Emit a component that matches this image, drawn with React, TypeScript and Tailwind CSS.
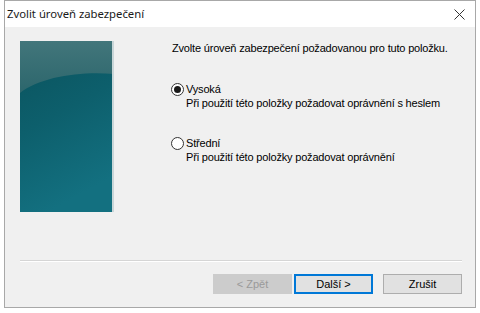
import React from "react";

const sans = { fontFamily: '"Liberation Sans", Arial, sans-serif' };

function SidePicture() {
  return (
    <svg width="94" height="171" viewBox="0 0 94 171" className="block">
      <defs>
        <linearGradient id="main" x1="0" y1="0" x2="0.3" y2="1">
          <stop offset="0" stopColor="#0a525c" />
          <stop offset="0.5" stopColor="#0d5f6c" />
          <stop offset="1" stopColor="#137080" />
        </linearGradient>
        <linearGradient id="gloss" x1="0" y1="0" x2="0" y2="1">
          <stop offset="0" stopColor="#42767b" />
          <stop offset="1" stopColor="#2c666c" />
        </linearGradient>
      </defs>
      <rect x="0" y="0" width="94" height="171" fill="url(#main)" />
      <path d="M0 0 H94 V33 C60 30 20 36 0 52 Z" fill="url(#gloss)" />
      <rect x="92" y="0" width="2" height="171" fill="#c9d6d8" />
    </svg>
  );
}

function Radio({ checked }: { checked?: boolean }) {
  return (
    <span className="flex h-[13px] w-[13px] shrink-0 items-center justify-center rounded-full border border-[#333333] bg-white">
      {checked && <span className="h-[7px] w-[7px] rounded-full bg-[#1a1a1a]" />}
    </span>
  );
}

function Option({ label, desc, checked }: { label: string; desc: string; checked?: boolean }) {
  return (
    <div className="flex flex-col">
      <div className="flex h-[14px] items-center gap-[2px]">
        <Radio checked={checked} />
        <span className="text-[11px] leading-[14px] text-black">{label}</span>
      </div>
      <div className="pl-[15px] text-[11px] leading-[14px] text-black">{desc}</div>
    </div>
  );
}

export default function App() {
  return (
    <div className="h-[313px] w-[480px] bg-white" style={sans}>
      <div className="ml-[4px] flex h-[308px] w-[472px] flex-col border border-[#a8a8a8] bg-[#f0f0f0]">
        {/* title bar */}
        <div className="flex h-[26px] shrink-0 items-center justify-between bg-white pl-[2px] pr-[10px]">
          <span
            className="text-[11.3px] text-[#1a1a1a]"
            style={{ fontFamily: '"Noto Sans", "Open Sans", sans-serif' }}
          >
            Zvolit úroveň zabezpečení
          </span>
          <svg width="11" height="11" viewBox="0 0 11 11">
            <path d="M0.5 0.5 L10.5 10.5 M10.5 0.5 L0.5 10.5" stroke="#333" strokeWidth="1" />
          </svg>
        </div>

        {/* body */}
        <div className="flex h-[185px] shrink-0 pl-[15px] pt-[14px]">
          <SidePicture />
          <div className="ml-[58px] flex flex-col text-[11px] leading-[14px] tracking-[-0.18px] text-black">
            <div>Zvolte úroveň zabezpečení požadovanou pro tuto položku.</div>
            <div className="-ml-[1px] mt-[27px]">
              <Option
                checked
                label="Vysoká"
                desc="Při použití této položky požadovat oprávnění s heslem"
              />
            </div>
            <div className="-ml-[1px] mt-[26px]">
              <Option label="Střední" desc="Při použití této položky požadovat oprávnění" />
            </div>
          </div>
        </div>

        {/* separator */}
        <div className="ml-[15px] mr-[13px] mt-[48px] border-t border-b border-t-[#d5d5d5] border-b-white" />

        {/* buttons */}
        <div className="mt-[12px] flex justify-end pr-[13px] text-[11px]">
          <button className="mr-[2px] h-[20px] w-[79px] border border-[#cccccc] bg-[#cccccc] text-[#9a9a9a]">
            &lt; Zpět
          </button>
          <button className="h-[20px] w-[79px] border-2 border-[#0078d7] bg-[#e1e1e1] text-black">
            Další &gt;
          </button>
          <button className="ml-[10px] h-[20px] w-[79px] border border-[#adadad] bg-[#e1e1e1] text-black">
            Zrušit
          </button>
        </div>
      </div>
    </div>
  );
}
